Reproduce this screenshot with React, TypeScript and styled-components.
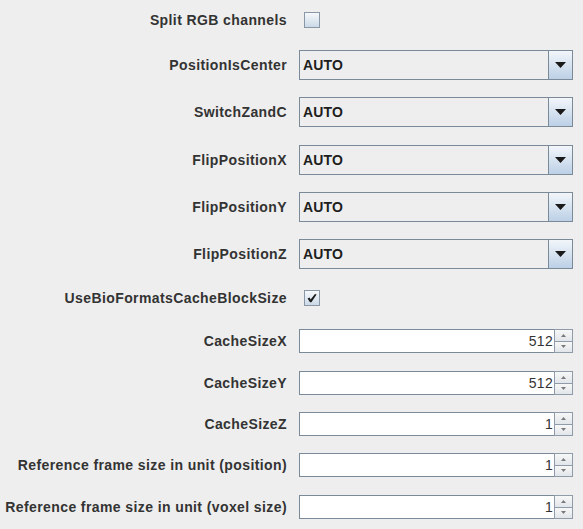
import styled, { createGlobalStyle } from 'styled-components'

const GlobalStyle = createGlobalStyle`
  html, body {
    margin: 0;
    padding: 0;
    background: #eeeeee;
  }
  body {
    font-family: 'Liberation Sans', Arial, sans-serif;
    width: 583px;
    height: 529px;
    overflow: hidden;
  }
`

const Form = styled.div`
  display: flex;
  flex-direction: column;
  width: 583px;
`

interface RowProps {
  $top: number
  $height: number
}

const Row = styled.div<RowProps>`
  display: flex;
  align-items: center;
  margin-top: ${({ $top }) => $top}px;
  height: ${({ $height }) => $height}px;
`

const Label = styled.div`
  width: 287px;
  margin-right: 12px;
  text-align: right;
  font-size: 14px;
  font-weight: 700;
  letter-spacing: 0.4px;
  color: #333333;
  white-space: nowrap;
`

const CheckBox = styled.div`
  width: 14px;
  height: 14px;
  margin-left: 5px;
  border: 1px solid #8a97a6;
  background: linear-gradient(#f6f9fc, #cbd9e7);
  display: flex;
  align-items: center;
  justify-content: center;
`

const Combo = styled.div`
  width: 274px;
  height: 30px;
  box-sizing: border-box;
  border: 1px solid #7a8a99;
  display: flex;
  background: #eeeeee;
`

const ComboText = styled.div`
  flex: 1;
  display: flex;
  align-items: center;
  padding-left: 3px;
  font-size: 14px;
  font-weight: 700;
  letter-spacing: 0.2px;
  color: #1e1e1e;
`

const ComboArrow = styled.div`
  width: 23px;
  border-left: 1px solid #7a8a99;
  background: linear-gradient(#f2f6fa, #bcd0e6);
  display: flex;
  align-items: center;
  justify-content: center;
`

const Spinner = styled.div`
  width: 274px;
  height: 24px;
  display: flex;
`

const SpinField = styled.div`
  flex: 1;
  box-sizing: border-box;
  border: 1px solid #7a8a99;
  border-right: none;
  background: #ffffff;
  display: flex;
  align-items: center;
  justify-content: flex-end;
  padding-right: 1px;
  font-size: 14px;
  letter-spacing: 0.3px;
  color: #333333;
`

const SpinButtons = styled.div`
  width: 19px;
  display: flex;
  flex-direction: column;
`

const SpinButton = styled.div`
  flex: 1;
  box-sizing: border-box;
  border: 1px solid #8f9ba8;
  background: linear-gradient(#f7f7f7, #e2e6ea);
  display: flex;
  align-items: center;
  justify-content: center;
  & + & {
    border-top: none;
  }
`

const Check = () => (
  <svg width="10" height="10" viewBox="0 0 10 10">
    <path d="M0.6 5.6 L3 9.2 L4.4 9.2 L9.6 1.6 L8 1 L3.6 6.6 L2.6 4.6 Z" fill="#1a1a1a" />
  </svg>
)

const DownTriangle = () => (
  <svg width="11" height="6" viewBox="0 0 11 6">
    <path d="M0 0 H11 L5.5 6 Z" fill="#1a1a1a" />
  </svg>
)

const Tiny = ({ up }: { up?: boolean }) => (
  <svg width="5" height="3" viewBox="0 0 5 3">
    <path d={up ? 'M0 3 H5 L2.5 0 Z' : 'M0 0 H5 L2.5 3 Z'} fill="#7a7a7a" />
  </svg>
)

const combos = [
  { label: 'PositionIsCenter', top: 23 },
  { label: 'SwitchZandC', top: 17 },
  { label: 'FlipPositionX', top: 18 },
  { label: 'FlipPositionY', top: 17 },
  { label: 'FlipPositionZ', top: 17 },
]

const spinners = [
  { label: 'CacheSizeX', value: '512', top: 23 },
  { label: 'CacheSizeY', value: '512', top: 18 },
  { label: 'CacheSizeZ', value: '1', top: 17 },
  { label: 'Reference frame size in unit (position)', value: '1', top: 17 },
  { label: 'Reference frame size in unit (voxel size)', value: '1', top: 18 },
]

const App: React.FC = () => {
  return (
    <>
      <GlobalStyle />
      <Form>
        <Row $top={12} $height={15}>
          <Label>Split RGB channels</Label>
          <CheckBox />
        </Row>
        {combos.map((c) => (
          <Row key={c.label} $top={c.top} $height={30}>
            <Label>{c.label}</Label>
            <Combo>
              <ComboText>AUTO</ComboText>
              <ComboArrow>
                <DownTriangle />
              </ComboArrow>
            </Combo>
          </Row>
        ))}
        <Row $top={21} $height={16}>
          <Label>UseBioFormatsCacheBlockSize</Label>
          <CheckBox>
            <Check />
          </CheckBox>
        </Row>
        {spinners.map((s) => (
          <Row key={s.label} $top={s.top} $height={24}>
            <Label>{s.label}</Label>
            <Spinner>
              <SpinField>{s.value}</SpinField>
              <SpinButtons>
                <SpinButton>
                  <Tiny up />
                </SpinButton>
                <SpinButton>
                  <Tiny />
                </SpinButton>
              </SpinButtons>
            </Spinner>
          </Row>
        ))}
      </Form>
    </>
  )
}

export default App
